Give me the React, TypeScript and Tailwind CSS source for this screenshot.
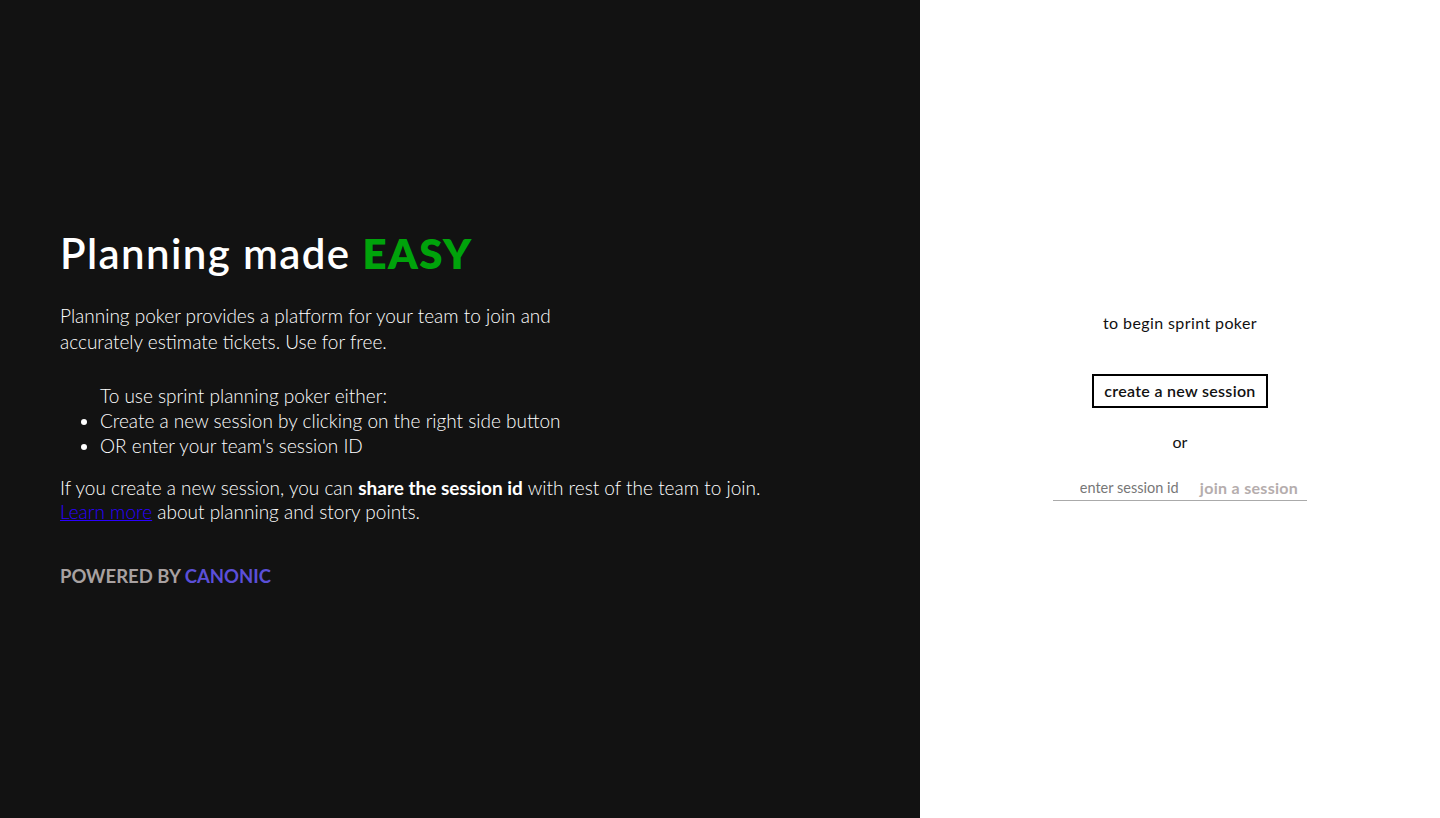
import { useState } from 'react'

export default function App() {
  const [sessionId, setSessionId] = useState('')

  return (
    <div className="flex h-[818px] w-full font-['Lato',sans-serif]">
      {/* Intro panel */}
      <div className="w-[920px] bg-[#121212] text-white flex flex-col justify-center px-[60px]">
        <h1 className="text-[42px] font-semibold leading-[50px] tracking-[1.4px]">
          Planning made <span className="text-[#00a30b] font-extrabold">EASY</span>
        </h1>
        <p className="mt-[25px] w-[520px] text-[19px] leading-[26px] font-light">
          Planning poker provides a platform for your team to join and accurately estimate tickets. Use for free.
        </p>
        <div className="mt-[28px] text-[19px] leading-[25px] font-light">
          <p className="pl-10">To use sprint planning poker either:</p>
          <ul className="list-disc pl-10">
            <li>Create a new session by clicking on the right side button</li>
            <li>OR enter your team's session ID</li>
          </ul>
        </div>
        <p className="mt-[18px] text-[19px] leading-[24px] font-light">
          If you create a new session, you can <strong className="font-bold">share the session id</strong> with rest of the team to join.
          <br />
          <a href="#" className="text-[#2b00ff] underline">Learn more</a> about planning and story points.
        </p>
        <div className="mt-[39px] text-[18.5px] font-bold text-[#a8a1a1]">
          POWERED BY <span className="text-[#5b4fd8]">CANONIC</span>
        </div>
      </div>

      {/* Session panel */}
      <div className="flex-1 bg-white flex flex-col items-center justify-center pb-[5px] text-[#111]">
        <p className="text-[16px] tracking-[0.4px] leading-[20px]">to begin sprint poker</p>
        <button className="mt-[41px] border-2 border-black w-[176px] h-[34px] text-[16px] tracking-[0.3px] font-semibold cursor-pointer">
          create a new session
        </button>
        <p className="mt-[24px] text-[16px] leading-[20px]">or</p>
        <div className="mt-[24px] w-[254px] flex items-center justify-center gap-[19px] border-b border-[#aaa] pl-[18px]">
          <input
            value={sessionId}
            onChange={(e) => setSessionId(e.target.value)}
            placeholder="enter session id"
            className="w-[101px] text-[14.5px] text-[#333] placeholder-[#777] outline-none bg-transparent"
          />
          <button className="text-[16px] tracking-[0.3px] font-bold text-[#b5adad] cursor-pointer">join a session</button>
        </div>
      </div>
    </div>
  )
}
